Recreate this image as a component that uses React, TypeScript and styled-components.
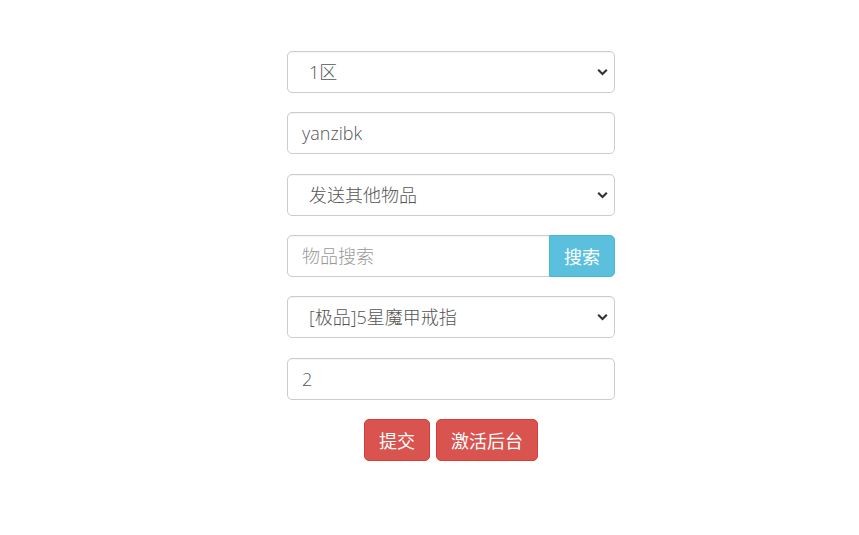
import React from 'react';
import styled, { createGlobalStyle } from 'styled-components';

const GlobalStyle = createGlobalStyle`
	html, body {
		margin: 0;
		padding: 0;
		background: #ffffff;
	}
	body {
		font-family: "Open Sans", "Noto Sans CJK SC", sans-serif;
		font-weight: 300;
	}
	* {
		box-sizing: border-box;
	}
`;

const Page = styled.div`
	width: 859px;
	height: 535px;
	padding: 51px 0 0 287px;
`;

const Form = styled.form`
	width: 328px;
	display: flex;
	flex-direction: column;
	gap: 19.33px;
	margin: 0;
`;

const fieldBase = `
	height: 42px;
	width: 100%;
	border: 1px solid #cccccc;
	border-radius: 5px;
	background-color: #ffffff;
	color: #555555;
	font-family: "Open Sans", "Noto Sans CJK SC", sans-serif;
	font-weight: 300;
	font-size: 18px;
	outline: none;
	box-shadow: inset 0 1px 1px rgba(0, 0, 0, 0.04);
`;

const Select = styled.select`
	${fieldBase}
	appearance: none;
	-webkit-appearance: none;
	padding: 0 30px 0 21px;
	background-image: url("data:image/svg+xml;utf8,<svg xmlns='http://www.w3.org/2000/svg' width='11' height='8' viewBox='0 0 11 8'><path d='M1.2 1.8 L5.5 6 L9.8 1.8' fill='none' stroke='%23333' stroke-width='2.2'/></svg>");
	background-repeat: no-repeat;
	background-position: right 6px center;
`;

const Input = styled.input`
	${fieldBase}
	padding: 0 14px;

	&::placeholder {
		color: #999999;
	}
`;

const InputGroup = styled.div`
	display: flex;
	height: 42px;

	${Input} {
		flex: 1;
		border-radius: 5px 0 0 5px;
	}
`;

const Button = styled.button<{ $tone: 'info' | 'danger' }>`
	height: 42px;
	padding: 0 14px;
	border: 1px solid ${(p) => (p.$tone === 'info' ? '#46b8da' : '#d43f3a')};
	background-color: ${(p) => (p.$tone === 'info' ? '#5bc0de' : '#d9534f')};
	color: #ffffff;
	font-family: "Open Sans", "Noto Sans CJK SC", sans-serif;
	font-weight: 400;
	font-size: 18px;
	border-radius: 5px;
	cursor: pointer;
`;

const SearchButton = styled(Button)`
	width: 66px;
	padding: 0;
	border-radius: 0 5px 5px 0;
	margin-left: -1px;
`;

const Actions = styled.div`
	display: flex;
	justify-content: center;
	gap: 6px;
`;

function App() {
	return (
		<>
			<GlobalStyle />
			<Page>
				<Form onSubmit={(e) => e.preventDefault()}>
					<Select defaultValue="1">
						<option value="1">1区</option>
					</Select>
					<Input defaultValue="yanzibk" />
					<Select defaultValue="other">
						<option value="other">发送其他物品</option>
					</Select>
					<InputGroup>
						<Input placeholder="物品搜索" />
						<SearchButton type="button" $tone="info">
							搜索
						</SearchButton>
					</InputGroup>
					<Select defaultValue="ring">
						<option value="ring">[极品]5星魔甲戒指</option>
					</Select>
					<Input defaultValue="2" />
					<Actions>
						<Button type="submit" $tone="danger">
							提交
						</Button>
						<Button type="button" $tone="danger">
							激活后台
						</Button>
					</Actions>
				</Form>
			</Page>
		</>
	);
}

export default App;
